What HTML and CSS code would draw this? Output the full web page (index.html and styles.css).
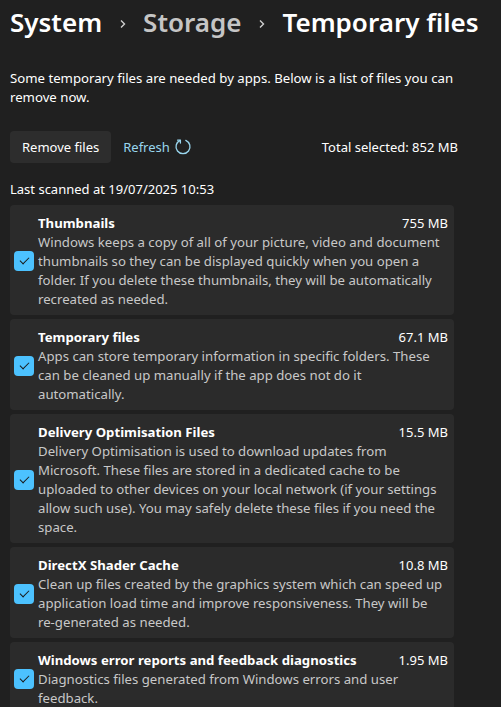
FILE: index.html
```html
<!DOCTYPE html>
<html lang="en">
<head>
  <meta charset="UTF-8" />
  <title>Temporary files</title>
  <link rel="stylesheet" href="styles.css">
</head>
<body>

  <!-- Breadcrumb header -->
  <h1 class="crumbs">
    <span>System</span>
    <span class="chev"><svg width="8" height="10" viewBox="0 0 8 10"><path d="M2 1.5 L5.5 5 L2 8.5" fill="none" stroke="#cfcfcf" stroke-width="1.4"/></svg></span>
    <span class="dim">Storage</span>
    <span class="chev"><svg width="8" height="10" viewBox="0 0 8 10"><path d="M2 1.5 L5.5 5 L2 8.5" fill="none" stroke="#cfcfcf" stroke-width="1.4"/></svg></span>
    <span>Temporary files</span>
  </h1>

  <p class="intro">Some temporary files are needed by apps. Below is a list of files you can remove now.</p>

  <div class="toolbar">
    <button class="btn">Remove files</button>
    <a class="refresh" href="#">Refresh
      <svg width="18" height="18" viewBox="0 0 18 18">
        <path d="M6.2 2.3 A7 7 0 1 0 11.8 2.3" fill="none" stroke="#99d6ee" stroke-width="1.3" stroke-linecap="round"/>
        <path d="M3.6 2.2 L6.4 2.2 L6.4 5" fill="none" stroke="#99d6ee" stroke-width="1.3" stroke-linecap="round" stroke-linejoin="round"/>
      </svg>
    </a>
    <span class="total">Total selected: 852 MB</span>
  </div>

  <div class="scanned">Last scanned at 19/07/2025 10:53</div>

  <div class="list">
    <div class="item">
      <span class="check"></span>
      <div class="body">
        <div class="head"><span class="name">Thumbnails</span><span class="size">755 MB</span></div>
        <div class="desc">Windows keeps a copy of all of your picture, video and document thumbnails so they can be displayed quickly when you open a folder. If you delete these thumbnails, they will be automatically recreated as needed.</div>
      </div>
    </div>
    <div class="item">
      <span class="check"></span>
      <div class="body">
        <div class="head"><span class="name">Temporary files</span><span class="size">67.1 MB</span></div>
        <div class="desc">Apps can store temporary information in specific folders. These can be cleaned up manually if the app does not do it automatically.</div>
      </div>
    </div>
    <div class="item">
      <span class="check"></span>
      <div class="body">
        <div class="head"><span class="name">Delivery Optimisation Files</span><span class="size">15.5 MB</span></div>
        <div class="desc">Delivery Optimisation is used to download updates from Microsoft. These files are stored in a dedicated cache to be uploaded to other devices on your local network (if your settings allow such use). You may safely delete these files if you need the space.</div>
      </div>
    </div>
    <div class="item">
      <span class="check"></span>
      <div class="body">
        <div class="head"><span class="name">DirectX Shader Cache</span><span class="size">10.8 MB</span></div>
        <div class="desc">Clean up files created by the graphics system which can speed up application load time and improve responsiveness. They will be <span class="nowrap">re-generated</span> as needed.</div>
      </div>
    </div>
    <div class="item">
      <span class="check"></span>
      <div class="body">
        <div class="head"><span class="name">Windows error reports and feedback diagnostics</span><span class="size">1.95 MB</span></div>
        <div class="desc">Diagnostics files generated from Windows errors and user feedback.</div>
      </div>
    </div>
  </div>

</body>
</html>
```

FILE: styles.css
```css
body {
  margin: 0;
  padding: 0 43px 0 10px;
  background: #202020;
  color: #ffffff;
  font-family: "Noto Sans", sans-serif;
  font-size: 13px;
  overflow: hidden;
}

.crumbs {
  margin: 0;
  height: 44px;
  display: flex;
  align-items: center;
  font-size: 26px;
  font-weight: 600;
  white-space: nowrap;
}
.crumbs span {
  flex: none;
}
.crumbs .dim {
  color: #c5c5c5;
}
.chev {
  display: inline-flex;
  width: 41px;
  justify-content: center;
  padding-top: 3px;
}

.intro {
  margin: 25px 0 0;
  line-height: 19px;
  font-size: 13.2px;
  width: 452px;
}

.toolbar {
  display: flex;
  align-items: center;
  margin-top: 24px;
  height: 32px;
}
.btn {
  background: #2d2d2d;
  color: #ffffff;
  border: none;
  border-radius: 4px;
  height: 32px;
  padding: 0 12px;
  font-family: inherit;
  font-size: 13px;
}
.refresh {
  display: flex;
  align-items: center;
  gap: 4px;
  margin-left: 12px;
  color: #99d6ee;
  text-decoration: none;
}
.total {
  margin-left: auto;
}

.scanned {
  margin-top: 17px;
  line-height: 19px;
}

.list {
  margin-top: 6px;
  margin-right: 4px;
  display: flex;
  flex-direction: column;
  gap: 4px;
}
.item {
  display: flex;
  align-items: center;
  background: #2b2b2b;
  border-radius: 4px;
  padding: 8px 6px 6px 4px;
}
.check {
  flex: none;
  width: 20px;
  height: 20px;
  border-radius: 4px;
  background: #4cc2ff;
  margin-right: 4px;
  position: relative;
}
.check::after {
  content: "";
  position: absolute;
  left: 6px;
  top: 6px;
  width: 8px;
  height: 4px;
  border-left: 1.2px solid #1a1a1a;
  border-bottom: 1.2px solid #1a1a1a;
  transform: rotate(-45deg);
}
.body {
  flex: 1;
  line-height: 19px;
}
.head {
  display: flex;
  justify-content: space-between;
  line-height: 20px;
}
.name {
  font-weight: 700;
  font-size: 13.2px;
}
.desc {
  color: #c8c8c8;
  font-size: 13.2px;
}
.nowrap {
  white-space: nowrap;
}
```
